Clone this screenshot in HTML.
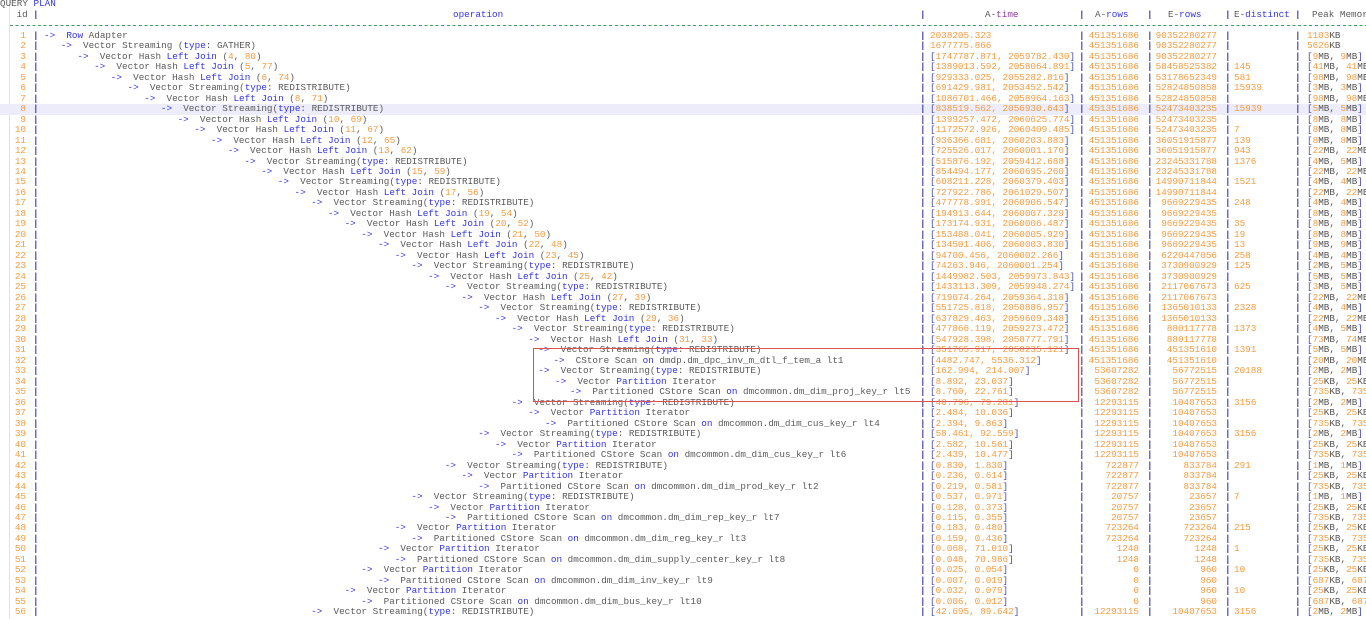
<!DOCTYPE html>
<html><head><meta charset="utf-8"><style>
html,body{margin:0;padding:0;background:#fff;width:1366px;height:619px;overflow:hidden}
body{font-family:"Liberation Mono",monospace;font-size:9.3px;color:#5a5a5a;position:relative}
#w{position:absolute;left:0;top:-0.75px;width:1366px}
.r{position:relative;height:10.49px;line-height:10.49px;white-space:pre}
.r>*{position:absolute;top:0;white-space:pre}
em{font-style:normal;color:#3434e0}
u{text-decoration:none;color:#f39c40}
.a{left:0;width:26px;text-align:right;color:#f39c40;font-style:normal}
.a::after,.t::before,.ar::before,.er::before,.ed::before,.pm::before{content:"|";position:absolute;top:0;color:#4a4aa8;font-weight:bold}
.a::after{left:33px}
.o{left:calc(44px + (var(--l) - 1) * 16.7px)}
.t{left:920px;padding-left:10px;color:#f39c40}
.t::before,.ar::before,.er::before,.ed::before,.pm::before{left:0}
.t em,.pm em{color:#4a4aa8}
.ar{left:1079px;width:60px;text-align:right;color:#f39c40}
.er{left:1147px;width:70px;text-align:right;color:#f39c40}
.ed{left:1225px;padding-left:9px;color:#f39c40;min-width:10px}
.pm{left:1295px;padding-left:12px;color:#555}
.hl{background:#ececfa}
#dash{position:absolute;left:10px;top:25px;width:1356px;height:1px;background:repeating-linear-gradient(90deg,#3f9a5c 0 3px,transparent 3px 5.6px)}
#vl{position:absolute;left:9px;top:0;width:1px;height:619px;background:#e2e2e2}
#box{position:absolute;left:533px;top:348px;width:546px;height:54px;border:1px solid #e05050;box-sizing:border-box}
</style></head><body>
<div id="vl"></div>
<div id="dash"></div>
<div id="w">
<div class="r"><span style="left:0">QUERY <em>PLAN</em></span></div>
<div class="r"><span style="left:11px"> id </span><span style="left:33px;color:#4a4aa8;font-weight:bold">|</span><span style="left:453px"><em>operation</em></span><span style="left:920px;color:#4a4aa8;font-weight:bold">|</span><span style="left:985px">A-<em style="color:#8a3a9a">time</em></span><span style="left:1079px;color:#4a4aa8;font-weight:bold">|</span><span style="left:1095px">A-<em>rows</em></span><span style="left:1147px;color:#4a4aa8;font-weight:bold">|</span><span style="left:1168px">E-<em>rows</em></span><span style="left:1225px;color:#4a4aa8;font-weight:bold">|</span><span style="left:1234px">E-<em>distinct</em></span><span style="left:1295px;color:#4a4aa8;font-weight:bold">|</span><span style="left:1312px">Peak Memor</span></div>
<div class="r"></div>
<div class="r"><i class="a">1</i><span class="o" style="--l:1"><em>-&gt;</em>  <em>Row</em> Adapter</span><span class="t">2038205.323</span><span class="ar">451351686</span><span class="er">90352280277</span><span class="ed"></span><span class="pm"><u>1103</u>KB</span></div>
<div class="r"><i class="a">2</i><span class="o" style="--l:2"><em>-&gt;</em>  Vector Streaming (<em>type</em>: GATHER)</span><span class="t">1677775.866</span><span class="ar">451351686</span><span class="er">90352280277</span><span class="ed"></span><span class="pm"><u>5626</u>KB</span></div>
<div class="r"><i class="a">3</i><span class="o" style="--l:3"><em>-&gt;</em>  Vector Hash <em>Left Join</em> (<u>4</u>, <u>80</u>)</span><span class="t"><em>[</em>1747787.871, 2059782.430<em>]</em></span><span class="ar">451351686</span><span class="er">90352280277</span><span class="ed"></span><span class="pm"><em>[</em><u>9</u>MB, <u>9</u>MB<em>]</em></span></div>
<div class="r"><i class="a">4</i><span class="o" style="--l:4"><em>-&gt;</em>  Vector Hash <em>Left Join</em> (<u>5</u>, <u>77</u>)</span><span class="t"><em>[</em>1389013.592, 2058064.891<em>]</em></span><span class="ar">451351686</span><span class="er">58458525382</span><span class="ed">145</span><span class="pm"><em>[</em><u>41</u>MB, <u>41</u>MB<em>]</em></span></div>
<div class="r"><i class="a">5</i><span class="o" style="--l:5"><em>-&gt;</em>  Vector Hash <em>Left Join</em> (<u>6</u>, <u>74</u>)</span><span class="t"><em>[</em>929333.025, 2055282.816<em>]</em></span><span class="ar">451351686</span><span class="er">53178652349</span><span class="ed">581</span><span class="pm"><em>[</em><u>98</u>MB, <u>98</u>MB<em>]</em></span></div>
<div class="r"><i class="a">6</i><span class="o" style="--l:6"><em>-&gt;</em>  Vector Streaming(<em>type</em>: REDISTRIBUTE)</span><span class="t"><em>[</em>691429.981, 2053452.542<em>]</em></span><span class="ar">451351686</span><span class="er">52824850858</span><span class="ed">15939</span><span class="pm"><em>[</em><u>3</u>MB, <u>3</u>MB<em>]</em></span></div>
<div class="r"><i class="a">7</i><span class="o" style="--l:7"><em>-&gt;</em>  Vector Hash <em>Left Join</em> (<u>8</u>, <u>71</u>)</span><span class="t"><em>[</em>1086701.466, 2058964.163<em>]</em></span><span class="ar">451351686</span><span class="er">52824850858</span><span class="ed"></span><span class="pm"><em>[</em><u>98</u>MB, <u>98</u>MB<em>]</em></span></div>
<div class="r hl"><i class="a">8</i><span class="o" style="--l:8"><em>-&gt;</em>  Vector Streaming(<em>type</em>: REDISTRIBUTE)</span><span class="t"><em>[</em>838519.562, 2056930.643<em>]</em></span><span class="ar">451351686</span><span class="er">52473403235</span><span class="ed">15939</span><span class="pm"><em>[</em><u>5</u>MB, <u>5</u>MB<em>]</em></span></div>
<div class="r"><i class="a">9</i><span class="o" style="--l:9"><em>-&gt;</em>  Vector Hash <em>Left Join</em> (<u>10</u>, <u>69</u>)</span><span class="t"><em>[</em>1399257.472, 2060625.774<em>]</em></span><span class="ar">451351686</span><span class="er">52473403235</span><span class="ed"></span><span class="pm"><em>[</em><u>8</u>MB, <u>8</u>MB<em>]</em></span></div>
<div class="r"><i class="a">10</i><span class="o" style="--l:10"><em>-&gt;</em>  Vector Hash <em>Left Join</em> (<u>11</u>, <u>67</u>)</span><span class="t"><em>[</em>1172572.926, 2060409.485<em>]</em></span><span class="ar">451351686</span><span class="er">52473403235</span><span class="ed">7</span><span class="pm"><em>[</em><u>8</u>MB, <u>8</u>MB<em>]</em></span></div>
<div class="r"><i class="a">11</i><span class="o" style="--l:11"><em>-&gt;</em>  Vector Hash <em>Left Join</em> (<u>12</u>, <u>65</u>)</span><span class="t"><em>[</em>936366.681, 2060203.883<em>]</em></span><span class="ar">451351686</span><span class="er">36051915877</span><span class="ed">139</span><span class="pm"><em>[</em><u>8</u>MB, <u>8</u>MB<em>]</em></span></div>
<div class="r"><i class="a">12</i><span class="o" style="--l:12"><em>-&gt;</em>  Vector Hash <em>Left Join</em> (<u>13</u>, <u>62</u>)</span><span class="t"><em>[</em>725526.017, 2060001.170<em>]</em></span><span class="ar">451351686</span><span class="er">36051915877</span><span class="ed">943</span><span class="pm"><em>[</em><u>22</u>MB, <u>22</u>MB<em>]</em></span></div>
<div class="r"><i class="a">13</i><span class="o" style="--l:13"><em>-&gt;</em>  Vector Streaming(<em>type</em>: REDISTRIBUTE)</span><span class="t"><em>[</em>515876.192, 2059412.688<em>]</em></span><span class="ar">451351686</span><span class="er">23245331788</span><span class="ed">1376</span><span class="pm"><em>[</em><u>4</u>MB, <u>5</u>MB<em>]</em></span></div>
<div class="r"><i class="a">14</i><span class="o" style="--l:14"><em>-&gt;</em>  Vector Hash <em>Left Join</em> (<u>15</u>, <u>59</u>)</span><span class="t"><em>[</em>854494.177, 2060695.260<em>]</em></span><span class="ar">451351686</span><span class="er">23245331788</span><span class="ed"></span><span class="pm"><em>[</em><u>22</u>MB, <u>22</u>MB<em>]</em></span></div>
<div class="r"><i class="a">15</i><span class="o" style="--l:15"><em>-&gt;</em>  Vector Streaming(<em>type</em>: REDISTRIBUTE)</span><span class="t"><em>[</em>608211.228, 2060379.403<em>]</em></span><span class="ar">451351686</span><span class="er">14990711844</span><span class="ed">1521</span><span class="pm"><em>[</em><u>4</u>MB, <u>4</u>MB<em>]</em></span></div>
<div class="r"><i class="a">16</i><span class="o" style="--l:16"><em>-&gt;</em>  Vector Hash <em>Left Join</em> (<u>17</u>, <u>56</u>)</span><span class="t"><em>[</em>727922.786, 2061029.507<em>]</em></span><span class="ar">451351686</span><span class="er">14990711844</span><span class="ed"></span><span class="pm"><em>[</em><u>22</u>MB, <u>22</u>MB<em>]</em></span></div>
<div class="r"><i class="a">17</i><span class="o" style="--l:17"><em>-&gt;</em>  Vector Streaming(<em>type</em>: REDISTRIBUTE)</span><span class="t"><em>[</em>477778.991, 2060906.547<em>]</em></span><span class="ar">451351686</span><span class="er">9669229435</span><span class="ed">248</span><span class="pm"><em>[</em><u>4</u>MB, <u>4</u>MB<em>]</em></span></div>
<div class="r"><i class="a">18</i><span class="o" style="--l:18"><em>-&gt;</em>  Vector Hash <em>Left Join</em> (<u>19</u>, <u>54</u>)</span><span class="t"><em>[</em>194913.644, 2060007.329<em>]</em></span><span class="ar">451351686</span><span class="er">9669229435</span><span class="ed"></span><span class="pm"><em>[</em><u>8</u>MB, <u>8</u>MB<em>]</em></span></div>
<div class="r"><i class="a">19</i><span class="o" style="--l:19"><em>-&gt;</em>  Vector Hash <em>Left Join</em> (<u>20</u>, <u>52</u>)</span><span class="t"><em>[</em>173174.931, 2060006.487<em>]</em></span><span class="ar">451351686</span><span class="er">9669229435</span><span class="ed">35</span><span class="pm"><em>[</em><u>8</u>MB, <u>8</u>MB<em>]</em></span></div>
<div class="r"><i class="a">20</i><span class="o" style="--l:20"><em>-&gt;</em>  Vector Hash <em>Left Join</em> (<u>21</u>, <u>50</u>)</span><span class="t"><em>[</em>153488.041, 2060005.929<em>]</em></span><span class="ar">451351686</span><span class="er">9669229435</span><span class="ed">19</span><span class="pm"><em>[</em><u>8</u>MB, <u>8</u>MB<em>]</em></span></div>
<div class="r"><i class="a">21</i><span class="o" style="--l:21"><em>-&gt;</em>  Vector Hash <em>Left Join</em> (<u>22</u>, <u>48</u>)</span><span class="t"><em>[</em>134501.406, 2060003.830<em>]</em></span><span class="ar">451351686</span><span class="er">9669229435</span><span class="ed">13</span><span class="pm"><em>[</em><u>9</u>MB, <u>9</u>MB<em>]</em></span></div>
<div class="r"><i class="a">22</i><span class="o" style="--l:22"><em>-&gt;</em>  Vector Hash <em>Left Join</em> (<u>23</u>, <u>45</u>)</span><span class="t"><em>[</em>94700.456, 2060002.266<em>]</em></span><span class="ar">451351686</span><span class="er">6220447056</span><span class="ed">258</span><span class="pm"><em>[</em><u>4</u>MB, <u>4</u>MB<em>]</em></span></div>
<div class="r"><i class="a">23</i><span class="o" style="--l:23"><em>-&gt;</em>  Vector Streaming(<em>type</em>: REDISTRIBUTE)</span><span class="t"><em>[</em>74263.946, 2060001.254<em>]</em></span><span class="ar">451351686</span><span class="er">3730900929</span><span class="ed">125</span><span class="pm"><em>[</em><u>2</u>MB, <u>5</u>MB<em>]</em></span></div>
<div class="r"><i class="a">24</i><span class="o" style="--l:24"><em>-&gt;</em>  Vector Hash <em>Left Join</em> (<u>25</u>, <u>42</u>)</span><span class="t"><em>[</em>1449982.503, 2059973.843<em>]</em></span><span class="ar">451351686</span><span class="er">3730900929</span><span class="ed"></span><span class="pm"><em>[</em><u>5</u>MB, <u>5</u>MB<em>]</em></span></div>
<div class="r"><i class="a">25</i><span class="o" style="--l:25"><em>-&gt;</em>  Vector Streaming(<em>type</em>: REDISTRIBUTE)</span><span class="t"><em>[</em>1433113.309, 2059948.274<em>]</em></span><span class="ar">451351686</span><span class="er">2117067673</span><span class="ed">625</span><span class="pm"><em>[</em><u>3</u>MB, <u>5</u>MB<em>]</em></span></div>
<div class="r"><i class="a">26</i><span class="o" style="--l:26"><em>-&gt;</em>  Vector Hash <em>Left Join</em> (<u>27</u>, <u>39</u>)</span><span class="t"><em>[</em>719074.264, 2059364.318<em>]</em></span><span class="ar">451351686</span><span class="er">2117067673</span><span class="ed"></span><span class="pm"><em>[</em><u>22</u>MB, <u>22</u>MB<em>]</em></span></div>
<div class="r"><i class="a">27</i><span class="o" style="--l:27"><em>-&gt;</em>  Vector Streaming(<em>type</em>: REDISTRIBUTE)</span><span class="t"><em>[</em>551725.818, 2058886.957<em>]</em></span><span class="ar">451351686</span><span class="er">1365010133</span><span class="ed">2328</span><span class="pm"><em>[</em><u>4</u>MB, <u>4</u>MB<em>]</em></span></div>
<div class="r"><i class="a">28</i><span class="o" style="--l:28"><em>-&gt;</em>  Vector Hash <em>Left Join</em> (<u>29</u>, <u>36</u>)</span><span class="t"><em>[</em>637829.463, 2059609.348<em>]</em></span><span class="ar">451351686</span><span class="er">1365010133</span><span class="ed"></span><span class="pm"><em>[</em><u>22</u>MB, <u>22</u>MB<em>]</em></span></div>
<div class="r"><i class="a">29</i><span class="o" style="--l:29"><em>-&gt;</em>  Vector Streaming(<em>type</em>: REDISTRIBUTE)</span><span class="t"><em>[</em>477866.119, 2059273.472<em>]</em></span><span class="ar">451351686</span><span class="er">880117778</span><span class="ed">1373</span><span class="pm"><em>[</em><u>4</u>MB, <u>5</u>MB<em>]</em></span></div>
<div class="r"><i class="a">30</i><span class="o" style="--l:30"><em>-&gt;</em>  Vector Hash <em>Left Join</em> (<u>31</u>, <u>33</u>)</span><span class="t"><em>[</em>547928.398, 2058777.791<em>]</em></span><span class="ar">451351686</span><span class="er">880117778</span><span class="ed"></span><span class="pm"><em>[</em><u>73</u>MB, <u>74</u>MB<em>]</em></span></div>
<div class="r"><i class="a">31</i><span class="o" style="--l:30.6"><em>-&gt;</em>  Vector Streaming(<em>type</em>: REDISTRIBUTE)</span><span class="t"><em>[</em>351765.917, 2058235.121<em>]</em></span><span class="ar">451351686</span><span class="er">451351610</span><span class="ed">1391</span><span class="pm"><em>[</em><u>5</u>MB, <u>5</u>MB<em>]</em></span></div>
<div class="r"><i class="a">32</i><span class="o" style="--l:31.5"><em>-&gt;</em>  CStore Scan <em>on</em> dmdp.dm_dpc_inv_m_dtl_f_tem_a lt1</span><span class="t"><em>[</em>4482.747, 5536.312<em>]</em></span><span class="ar">451351686</span><span class="er">451351610</span><span class="ed"></span><span class="pm"><em>[</em><u>20</u>MB, <u>20</u>MB<em>]</em></span></div>
<div class="r"><i class="a">33</i><span class="o" style="--l:30.6"><em>-&gt;</em>  Vector Streaming(<em>type</em>: REDISTRIBUTE)</span><span class="t"><em>[</em>162.994, 214.007<em>]</em></span><span class="ar">53607282</span><span class="er">56772515</span><span class="ed">20188</span><span class="pm"><em>[</em><u>2</u>MB, <u>2</u>MB<em>]</em></span></div>
<div class="r"><i class="a">34</i><span class="o" style="--l:31.6"><em>-&gt;</em>  Vector <em>Partition</em> Iterator</span><span class="t"><em>[</em>8.892, 23.037<em>]</em></span><span class="ar">53607282</span><span class="er">56772515</span><span class="ed"></span><span class="pm"><em>[</em><u>25</u>KB, <u>25</u>KB</span></div>
<div class="r"><i class="a">35</i><span class="o" style="--l:32.5"><em>-&gt;</em>  Partitioned CStore Scan <em>on</em> dmcommon.dm_dim_proj_key_r lt5</span><span class="t"><em>[</em>8.760, 22.761<em>]</em></span><span class="ar">53607282</span><span class="er">56772515</span><span class="ed"></span><span class="pm"><em>[</em><u>735</u>KB, <u>735</u></span></div>
<div class="r"><i class="a">36</i><span class="o" style="--l:29"><em>-&gt;</em>  Vector Streaming(<em>type</em>: REDISTRIBUTE)</span><span class="t"><em>[</em>40.796, 79.281<em>]</em></span><span class="ar">12293115</span><span class="er">10407653</span><span class="ed">3156</span><span class="pm"><em>[</em><u>2</u>MB, <u>2</u>MB<em>]</em></span></div>
<div class="r"><i class="a">37</i><span class="o" style="--l:30"><em>-&gt;</em>  Vector <em>Partition</em> Iterator</span><span class="t"><em>[</em>2.484, 10.036<em>]</em></span><span class="ar">12293115</span><span class="er">10407653</span><span class="ed"></span><span class="pm"><em>[</em><u>25</u>KB, <u>25</u>KB</span></div>
<div class="r"><i class="a">38</i><span class="o" style="--l:31"><em>-&gt;</em>  Partitioned CStore Scan <em>on</em> dmcommon.dm_dim_cus_key_r lt4</span><span class="t"><em>[</em>2.394, 9.863<em>]</em></span><span class="ar">12293115</span><span class="er">10407653</span><span class="ed"></span><span class="pm"><em>[</em><u>735</u>KB, <u>735</u></span></div>
<div class="r"><i class="a">39</i><span class="o" style="--l:27"><em>-&gt;</em>  Vector Streaming(<em>type</em>: REDISTRIBUTE)</span><span class="t"><em>[</em>58.461, 92.559<em>]</em></span><span class="ar">12293115</span><span class="er">10407653</span><span class="ed">3156</span><span class="pm"><em>[</em><u>2</u>MB, <u>2</u>MB<em>]</em></span></div>
<div class="r"><i class="a">40</i><span class="o" style="--l:28"><em>-&gt;</em>  Vector <em>Partition</em> Iterator</span><span class="t"><em>[</em>2.582, 10.561<em>]</em></span><span class="ar">12293115</span><span class="er">10407653</span><span class="ed"></span><span class="pm"><em>[</em><u>25</u>KB, <u>25</u>KB</span></div>
<div class="r"><i class="a">41</i><span class="o" style="--l:29"><em>-&gt;</em>  Partitioned CStore Scan <em>on</em> dmcommon.dm_dim_cus_key_r lt6</span><span class="t"><em>[</em>2.439, 10.477<em>]</em></span><span class="ar">12293115</span><span class="er">10407653</span><span class="ed"></span><span class="pm"><em>[</em><u>735</u>KB, <u>735</u></span></div>
<div class="r"><i class="a">42</i><span class="o" style="--l:25"><em>-&gt;</em>  Vector Streaming(<em>type</em>: REDISTRIBUTE)</span><span class="t"><em>[</em>0.830, 1.830<em>]</em></span><span class="ar">722877</span><span class="er">833784</span><span class="ed">291</span><span class="pm"><em>[</em><u>1</u>MB, <u>1</u>MB<em>]</em></span></div>
<div class="r"><i class="a">43</i><span class="o" style="--l:26"><em>-&gt;</em>  Vector <em>Partition</em> Iterator</span><span class="t"><em>[</em>0.236, 0.614<em>]</em></span><span class="ar">722877</span><span class="er">833784</span><span class="ed"></span><span class="pm"><em>[</em><u>25</u>KB, <u>25</u>KB</span></div>
<div class="r"><i class="a">44</i><span class="o" style="--l:27"><em>-&gt;</em>  Partitioned CStore Scan <em>on</em> dmcommon.dm_dim_prod_key_r lt2</span><span class="t"><em>[</em>0.219, 0.581<em>]</em></span><span class="ar">722877</span><span class="er">833784</span><span class="ed"></span><span class="pm"><em>[</em><u>735</u>KB, <u>735</u></span></div>
<div class="r"><i class="a">45</i><span class="o" style="--l:23"><em>-&gt;</em>  Vector Streaming(<em>type</em>: REDISTRIBUTE)</span><span class="t"><em>[</em>0.537, 0.971<em>]</em></span><span class="ar">20757</span><span class="er">23657</span><span class="ed">7</span><span class="pm"><em>[</em><u>1</u>MB, <u>1</u>MB<em>]</em></span></div>
<div class="r"><i class="a">46</i><span class="o" style="--l:24"><em>-&gt;</em>  Vector <em>Partition</em> Iterator</span><span class="t"><em>[</em>0.128, 0.373<em>]</em></span><span class="ar">20757</span><span class="er">23657</span><span class="ed"></span><span class="pm"><em>[</em><u>25</u>KB, <u>25</u>KB</span></div>
<div class="r"><i class="a">47</i><span class="o" style="--l:25"><em>-&gt;</em>  Partitioned CStore Scan <em>on</em> dmcommon.dm_dim_rep_key_r lt7</span><span class="t"><em>[</em>0.115, 0.355<em>]</em></span><span class="ar">20757</span><span class="er">23657</span><span class="ed"></span><span class="pm"><em>[</em><u>735</u>KB, <u>735</u></span></div>
<div class="r"><i class="a">48</i><span class="o" style="--l:22"><em>-&gt;</em>  Vector <em>Partition</em> Iterator</span><span class="t"><em>[</em>0.183, 0.480<em>]</em></span><span class="ar">723264</span><span class="er">723264</span><span class="ed">215</span><span class="pm"><em>[</em><u>25</u>KB, <u>25</u>KB</span></div>
<div class="r"><i class="a">49</i><span class="o" style="--l:23"><em>-&gt;</em>  Partitioned CStore Scan <em>on</em> dmcommon.dm_dim_reg_key_r lt3</span><span class="t"><em>[</em>0.159, 0.436<em>]</em></span><span class="ar">723264</span><span class="er">723264</span><span class="ed"></span><span class="pm"><em>[</em><u>735</u>KB, <u>735</u></span></div>
<div class="r"><i class="a">50</i><span class="o" style="--l:21"><em>-&gt;</em>  Vector <em>Partition</em> Iterator</span><span class="t"><em>[</em>0.068, 71.010<em>]</em></span><span class="ar">1248</span><span class="er">1248</span><span class="ed">1</span><span class="pm"><em>[</em><u>25</u>KB, <u>25</u>KB</span></div>
<div class="r"><i class="a">51</i><span class="o" style="--l:22"><em>-&gt;</em>  Partitioned CStore Scan <em>on</em> dmcommon.dm_dim_supply_center_key_r lt8</span><span class="t"><em>[</em>0.048, 70.986<em>]</em></span><span class="ar">1248</span><span class="er">1248</span><span class="ed"></span><span class="pm"><em>[</em><u>735</u>KB, <u>735</u></span></div>
<div class="r"><i class="a">52</i><span class="o" style="--l:20"><em>-&gt;</em>  Vector <em>Partition</em> Iterator</span><span class="t"><em>[</em>0.025, 0.054<em>]</em></span><span class="ar">0</span><span class="er">960</span><span class="ed">10</span><span class="pm"><em>[</em><u>25</u>KB, <u>25</u>KB</span></div>
<div class="r"><i class="a">53</i><span class="o" style="--l:21"><em>-&gt;</em>  Partitioned CStore Scan <em>on</em> dmcommon.dm_dim_inv_key_r lt9</span><span class="t"><em>[</em>0.007, 0.019<em>]</em></span><span class="ar">0</span><span class="er">960</span><span class="ed"></span><span class="pm"><em>[</em><u>687</u>KB, <u>687</u></span></div>
<div class="r"><i class="a">54</i><span class="o" style="--l:19"><em>-&gt;</em>  Vector <em>Partition</em> Iterator</span><span class="t"><em>[</em>0.032, 0.079<em>]</em></span><span class="ar">0</span><span class="er">960</span><span class="ed">10</span><span class="pm"><em>[</em><u>25</u>KB, <u>25</u>KB</span></div>
<div class="r"><i class="a">55</i><span class="o" style="--l:20"><em>-&gt;</em>  Partitioned CStore Scan <em>on</em> dmcommon.dm_dim_bus_key_r lt10</span><span class="t"><em>[</em>0.006, 0.012<em>]</em></span><span class="ar">0</span><span class="er">960</span><span class="ed"></span><span class="pm"><em>[</em><u>687</u>KB, <u>687</u></span></div>
<div class="r"><i class="a">56</i><span class="o" style="--l:17"><em>-&gt;</em>  Vector Streaming(<em>type</em>: REDISTRIBUTE)</span><span class="t"><em>[</em>42.695, 89.642<em>]</em></span><span class="ar">12293115</span><span class="er">10407653</span><span class="ed">3156</span><span class="pm"><em>[</em><u>2</u>MB, <u>2</u>MB<em>]</em></span></div>
</div>
<div id="box"></div>
</body></html>
